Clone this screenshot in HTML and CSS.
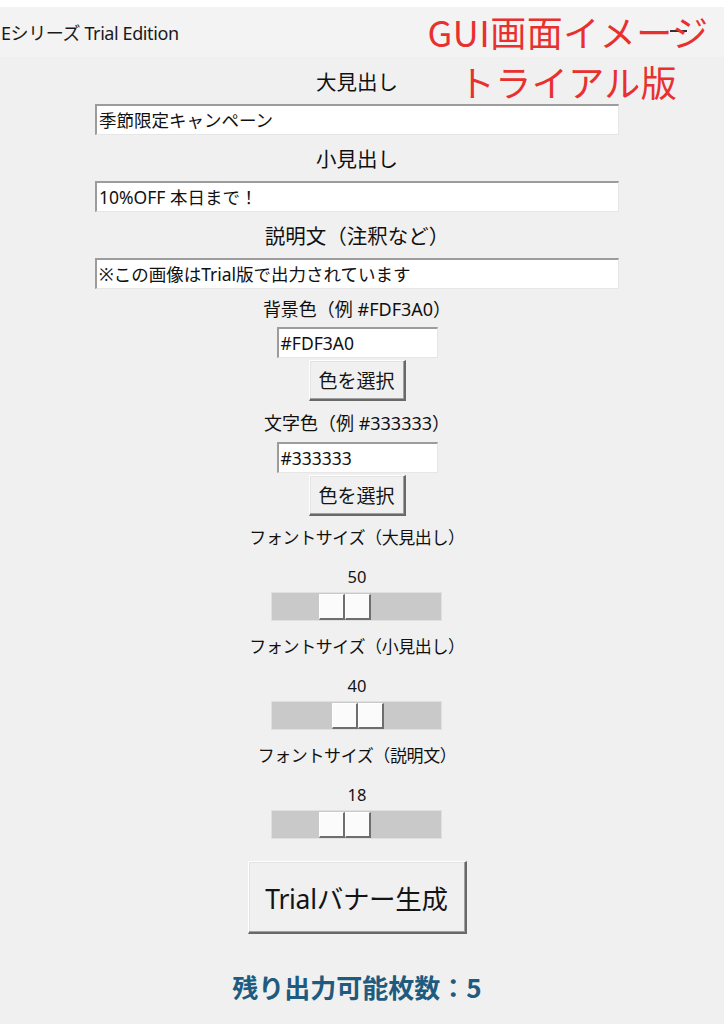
FILE: index.html
```html
<!DOCTYPE html>
<html lang="ja">
<head>
<meta charset="utf-8">
<title>Trial Edition</title>
<link rel="stylesheet" href="styles.css">
</head>
<body>
<div class="window">
  <div class="topstrip"></div>
  <div class="titlebar">
    <span class="title">Eシリーズ Trial Edition</span>
    <span class="minimize"></span>
  </div>
  <div class="overlay">
    <div class="overlay-line">GUI画面イメージ</div>
    <div class="overlay-line">トライアル版</div>
  </div>
  <main class="form">
    <div class="label label-big label-first">大見出し</div>
    <div class="entry entry-wide">季節限定キャンペーン</div>
    <div class="label label-big">小見出し</div>
    <div class="entry entry-wide">10%OFF 本日まで！</div>
    <div class="label label-big">説明文（注釈など）</div>
    <div class="entry entry-wide">※この画像はTrial版で出力されています</div>

    <div class="label label-color">背景色（例 #FDF3A0）</div>
    <div class="entry entry-small">#FDF3A0</div>
    <div class="btn btn-pick">色を選択</div>
    <div class="label label-color2">文字色（例 #333333）</div>
    <div class="entry entry-small">#333333</div>
    <div class="btn btn-pick">色を選択</div>

    <div class="scale-group scale-group-first">
      <div class="label label-scale">フォントサイズ（大見出し）</div>
      <div class="scale-value">50</div>
      <div class="trough"><div class="thumb" style="left: 47px"><span class="half"></span><span class="half"></span></div></div>
    </div>
    <div class="scale-group">
      <div class="label label-scale">フォントサイズ（小見出し）</div>
      <div class="scale-value">40</div>
      <div class="trough"><div class="thumb" style="left: 60px"><span class="half"></span><span class="half"></span></div></div>
    </div>
    <div class="scale-group">
      <div class="label label-scale">フォントサイズ（説明文）</div>
      <div class="scale-value">18</div>
      <div class="trough"><div class="thumb" style="left: 47px"><span class="half"></span><span class="half"></span></div></div>
    </div>

    <div class="btn btn-generate">Trialバナー生成</div>
    <div class="remaining">残り出力可能枚数：5</div>
  </main>
</div>
</body>
</html>
```
FILE: styles.css
```css
* { box-sizing: border-box; }

html, body {
  margin: 0;
  padding: 0;
}

body {
  background: #f0f0f0;
  font-family: "Noto Sans", "Noto Sans CJK JP", sans-serif;
  color: #111;
  width: 724px;
  height: 1024px;
  overflow: hidden;
}

.window {
  position: relative;
  width: 724px;
  height: 1024px;
}

.topstrip {
  height: 7px;
  background: #ffffff;
}

.titlebar {
  height: 50px;
  background: #f3f3f3;
  display: flex;
  align-items: center;
  justify-content: space-between;
  padding-right: 37px;
}

.title {
  font-size: 18px;
  letter-spacing: -0.4px;
  margin-left: 1px;
  color: #1a1a1a;
}

.minimize {
  width: 17px;
  height: 2px;
  background: #333;
  margin-top: -2px;
}

.overlay {
  position: absolute;
  left: 424px;
  top: 6px;
  width: 288px;
  text-align: center;
  color: #e8312f;
  font-family: "Noto Sans CJK JP", "Noto Sans", sans-serif;
  font-size: 36px;
  line-height: 50px;
  font-weight: 400;
}

.overlay-line {
  letter-spacing: 0.5px;
}

.form {
  display: flex;
  flex-direction: column;
  align-items: center;
  padding-right: 10px;
}

.label {
  display: flex;
  align-items: center;
  justify-content: center;
  white-space: nowrap;
  color: #101010;
}

.label-big {
  font-size: 20.5px;
  height: 46px;
}

.label-first {
  height: 47px;
}

.label-color {
  font-size: 18px;
  height: 38px;
}

.label-color2 {
  font-size: 18px;
  height: 41px;
}

.entry {
  background: #ffffff;
  border-style: solid;
  border-width: 2px 1px 1px 2px;
  border-color: #9c9c9c #e6e6e6 #e6e6e6 #9c9c9c;
  font-size: 17.5px;
  line-height: 28px;
  padding-left: 2px;
  white-space: nowrap;
  overflow: hidden;
  color: #111;
}

.entry-wide {
  width: 524px;
  height: 31px;
}

.entry-small {
  width: 161px;
  height: 31px;
  font-size: 17.5px;
}

.btn {
  display: flex;
  align-items: center;
  justify-content: center;
  background: #f0f0f0;
  border-style: solid;
  border-width: 1px 2px 2px 1px;
  border-color: #ffffff #696969 #696969 #ffffff;
  box-shadow: inset -1px -1px 0 #a0a0a0, inset 1px 1px 0 #e3e3e3;
  color: #141414;
  white-space: nowrap;
}

.btn-pick {
  width: 97px;
  height: 41px;
  margin-top: 2px;
  font-size: 19px;
}

.scale-group {
  display: flex;
  flex-direction: column;
  align-items: center;
  margin-top: 4px;
}

.scale-group-first {
  margin-top: 0;
}

.label-scale {
  font-size: 17px;
  height: 40px;
  letter-spacing: -0.4px;
}

.scale-value {
  margin-top: 7px;
  height: 28px;
  line-height: 28px;
  font-size: 16.5px;
  color: #141414;
}

.trough {
  position: relative;
  margin-top: 1px;
  width: 171px;
  height: 29px;
  background: #c9c9c9;
  border: 1px solid #e0e0e0;
}

.thumb {
  position: absolute;
  top: 1px;
  width: 52px;
  height: 26px;
  display: flex;
}

.half {
  flex: 1;
  background: #fbfbfb;
  border-style: solid;
  border-width: 1px 2px 2px 1px;
  border-color: #ffffff #6e6e6e #6e6e6e #ffffff;
}

.btn-generate {
  margin-top: 22px;
  width: 219px;
  height: 73px;
  font-size: 26.5px;
  letter-spacing: -0.3px;
}

.remaining {
  margin-top: 38px;
  height: 30px;
  line-height: 30px;
  font-family: "Noto Sans CJK JP", "Noto Sans", sans-serif;
  font-size: 26px;
  font-weight: 700;
  color: #1e5b7e;
  white-space: nowrap;
}
```
